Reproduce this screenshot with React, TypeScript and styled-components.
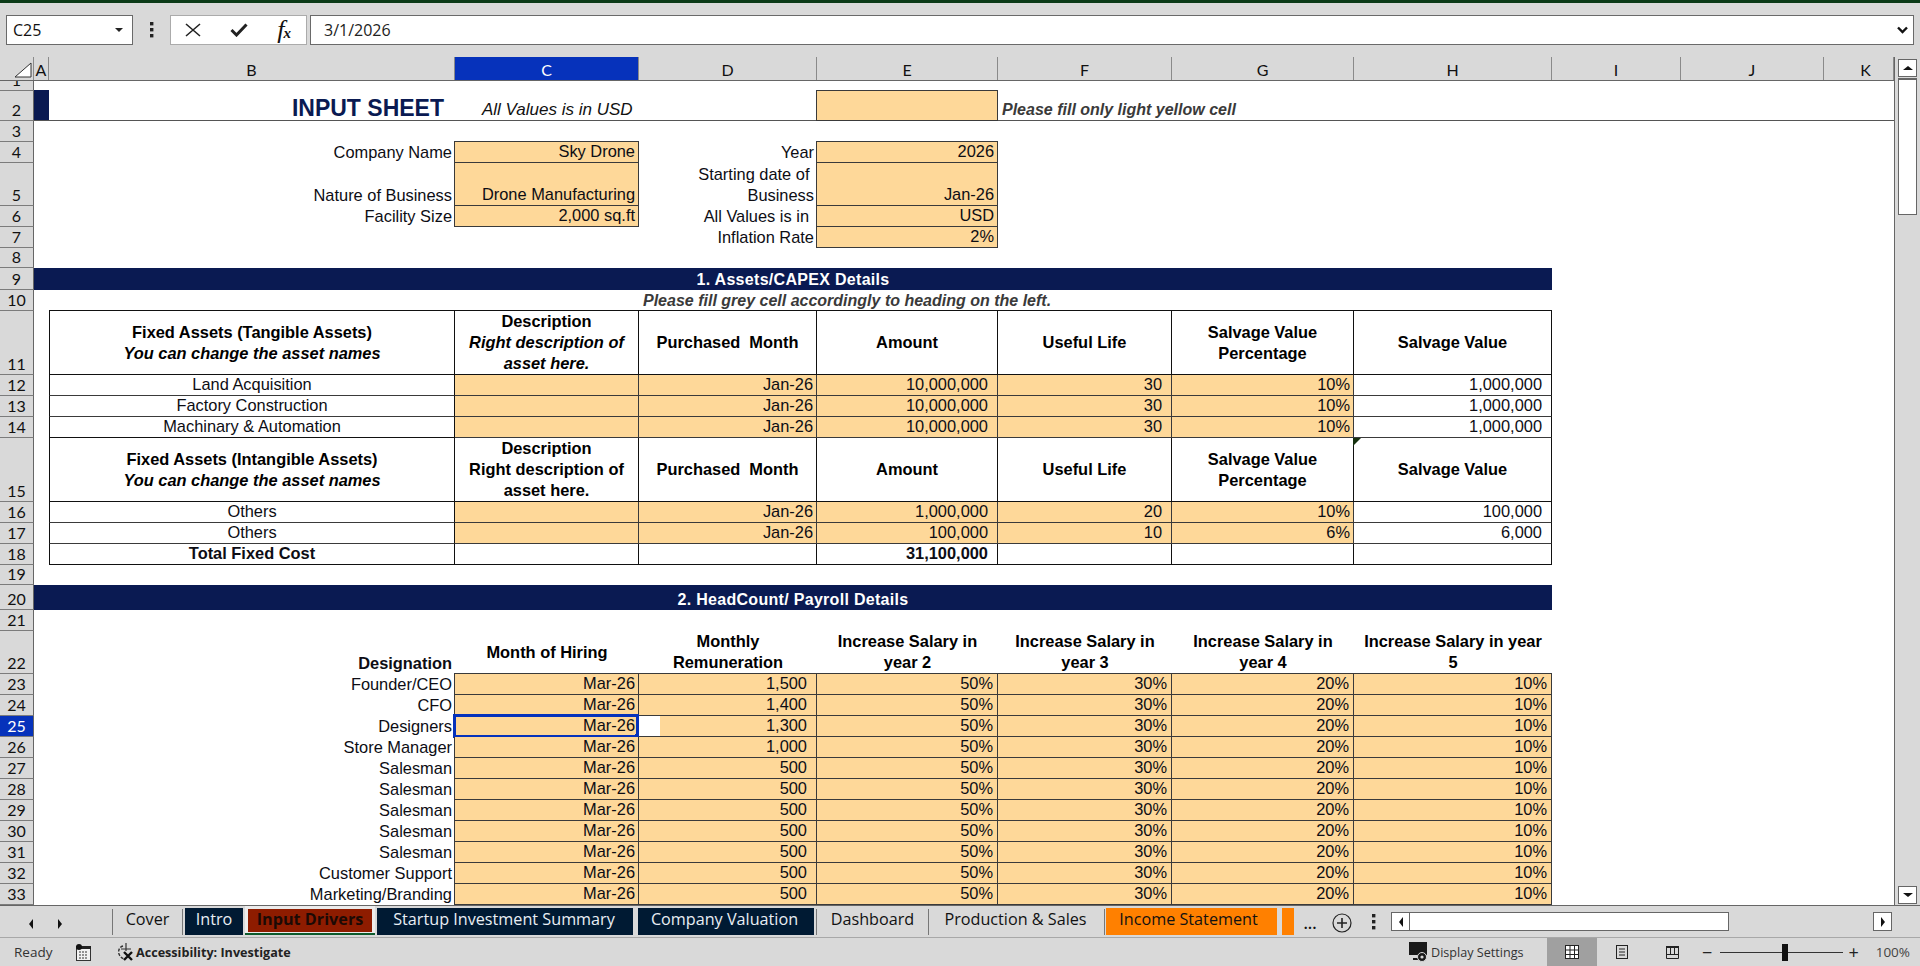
import React from "react";
import styled, { createGlobalStyle, css } from "styled-components";

const CELL_FONT = `"Liberation Sans", Arial, sans-serif`;
const UI_FONT = `"Open Sans", "Noto Sans", sans-serif`;
const HEAD_FONT = `Lato, "Open Sans", sans-serif`;
const ORANGE = "#fed899";
const NAVY = "#0a1a52";
const LINE = "#3a3a3a";
const SELECT = "#0632bb";
const GRID_COLUMNS = "34px 15px 406px 184px 178px 181px 174px 182px 198px 129px 143px 70px";

const Global = createGlobalStyle`
  html, body { margin: 0; padding: 0; background: #d9d9d9; overflow: hidden; }
  * { box-sizing: border-box; }
`;

const Window = styled.div`
  width: 1920px;
  height: 966px;
  display: flex;
  flex-direction: column;
  background: #d9d9d9;
  overflow: hidden;
`;
const TitleStrip = styled.div`
  height: 3px;
  flex: none;
  background: #0b3a17;
`;
const FormulaBar = styled.div`
  height: 54px;
  flex: none;
  display: flex;
  padding: 12px 6px 12px 6px;
  align-items: stretch;
`;
const NameBox = styled.div`
  width: 127px;
  background: #fff;
  border: 1px solid #6a6a6a;
  display: flex;
  align-items: center;
  justify-content: space-between;
  padding: 0 9px 0 6px;
  font: 16px ${UI_FONT};
  color: #111;
`;
const DownCaret = styled.span`
  width: 0;
  height: 0;
  border-left: 4px solid transparent;
  border-right: 4px solid transparent;
  border-top: 4px solid #222;
`;
const KebabWrap = styled.div`
  width: 37px;
  display: flex;
  align-items: center;
  justify-content: center;
`;
const FxGroup = styled.div`
  width: 137px;
  background: #fff;
  border: 1px solid #ababab;
  display: flex;
  align-items: center;
  justify-content: space-between;
  padding: 0 15px 0 14px;
`;
const FxF = styled.span`
  font: italic 400 26px/24px "Liberation Serif", serif;
  color: #111;
`;
const FxX = styled.span`
  font: italic 700 15px/15px "Liberation Serif", serif;
  color: #111;
  margin-left: -1px;
`;
const FormulaInput = styled.div`
  flex: 1;
  margin-left: 3px;
  background: #fff;
  border: 1px solid #6a6a6a;
  display: flex;
  align-items: center;
  justify-content: space-between;
  padding: 0 5px 0 13px;
  font: 16px ${UI_FONT};
  color: #222;
`;

const Middle = styled.div`
  height: 848px;
  flex: none;
  display: flex;
`;
const Sheet = styled.div`
  width: 1895px;
  display: flex;
  flex-direction: column;
  border-right: 1px solid #666;
  background: #fff;
  overflow: hidden;
`;
const ColumnHeader = styled.div`
  display: grid;
  grid-template-columns: ${GRID_COLUMNS};
  height: 24px;
  flex: none;
  background: #d9d9d9;
  border-bottom: 1px solid #666;
`;
const Corner = styled.div`
  display: flex;
  align-items: flex-end;
  justify-content: flex-end;
  padding: 0 1px 2px 0;
  border-right: 1px solid #8a8a8a;
`;
const ColHead = styled.div<{ $active?: boolean; $shift?: number }>`
  display: flex;
  align-items: center;
  justify-content: center;
  padding-top: 2px;
  padding-left: ${(p) => p.$shift ?? 0}px;
  font: 16px ${HEAD_FONT};
  border-right: 1px solid #8a8a8a;
  color: ${(p) => (p.$active ? "#fff" : "#111")};
  background: ${(p) => (p.$active ? SELECT : "transparent")};
`;
const Row = styled.div<{ $h: number }>`
  display: grid;
  grid-template-columns: ${GRID_COLUMNS};
  grid-template-rows: ${(p) => p.$h}px;
  height: ${(p) => p.$h}px;
  flex: none;
`;
const RowHead = styled.div<{ $active?: boolean }>`
  grid-column: 1;
  grid-row: 1;
  display: flex;
  align-items: flex-end;
  justify-content: center;
  overflow: hidden;
  font: 16px/20px ${HEAD_FONT};
  background: ${(p) => (p.$active ? SELECT : "#d9d9d9")};
  color: ${(p) => (p.$active ? "#fff" : "#111")};
  border-right: 1px solid #666;
  border-bottom: 1px solid #7c7c7c;
`;
const RuleLine = styled.div`
  grid-column: 2 / -1;
  grid-row: 1;
  border-bottom: 1px solid #555;
`;
const Marker = styled.div`
  grid-column: 2;
  grid-row: 1;
  background: ${NAVY};
  margin: -1px 0 1px;
`;

const cellBase = css<{ $col: number; $span?: number }>`
  grid-column: ${(p) => p.$col} / span ${(p) => p.$span ?? 1};
  grid-row: 1;
  font-family: ${CELL_FONT};
  font-size: 16.4px;
  line-height: 21px;
  color: #0d0d14;
  white-space: pre;
  display: flex;
`;
const Title = styled.div<{ $col: number }>`
  ${cellBase};
  justify-content: flex-end;
  align-items: flex-end;
  padding: 0 11px 2px 0;
  font-size: 23px;
  font-weight: 700;
  color: ${NAVY};
`;
const Caption = styled.div<{ $col: number; $pl?: number }>`
  ${cellBase};
  align-items: flex-end;
  padding-left: ${(p) => p.$pl ?? 0}px;
  padding-bottom: 1px;
  font-size: 17px;
  font-style: italic;
  color: #111;
`;
const Notice = styled.div<{ $col: number; $pb?: number }>`
  ${cellBase};
  align-items: flex-end;
  padding-left: 4px;
  padding-bottom: ${(p) => p.$pb ?? 1}px;
  font-size: 16px;
  font-style: italic;
  font-weight: 700;
  color: #3a3a3a;
`;
const Label = styled.div<{ $col: number; $pr?: number }>`
  ${cellBase};
  justify-content: flex-end;
  align-items: flex-end;
  text-align: right;
  padding-right: ${(p) => p.$pr ?? 3}px;
`;
const Designation = styled(Label)`
  font-weight: 700;
`;
const Input = styled.div<{
  $col: number;
  $pr?: number;
  $top?: boolean;
  $nick?: boolean;
}>`
  ${cellBase};
  justify-content: flex-end;
  align-items: flex-end;
  padding-right: ${(p) => p.$pr ?? 3}px;
  background: ${(p) =>
    p.$nick
      ? `linear-gradient(to right, #fff 21px, ${ORANGE} 21px)`
      : ORANGE};
  border-right: 1px solid ${LINE};
  border-bottom: 1px solid ${LINE};
  ${(p) => p.$top && `margin-top: -1px; border-top: 1px solid ${LINE};`}
`;
const LeadInput = styled(Input)`
  position: relative;
  margin-left: -1px;
  border-left: 1px solid ${LINE};
`;
const Selected = styled(Input)`
  position: relative;
`;
const SelectionRing = styled.span`
  position: absolute;
  left: -2px;
  top: -2px;
  right: -1px;
  bottom: -2px;
  border: 3px solid ${SELECT};
  pointer-events: none;
  &::after {
    content: "";
    position: absolute;
    right: -3px;
    bottom: -3px;
    width: 4px;
    height: 4px;
    background: ${SELECT};
  }
`;
const Band = styled.div<{ $drop?: number }>`
  grid-column: 2 / span 8;
  grid-row: 1;
  background: ${NAVY};
  color: #fff;
  display: flex;
  align-items: center;
  justify-content: center;
  padding-top: ${(p) => p.$drop ?? 0}px;
  font: 700 16px/21px ${CELL_FONT};
  letter-spacing: 0.3px;
`;
const Head = styled.div<{
  $col: number;
  $left?: boolean;
  $top?: boolean;
  $flag?: boolean;
}>`
  ${cellBase};
  position: relative;
  align-items: center;
  justify-content: center;
  text-align: center;
  font-weight: 700;
  color: #000;
  background: #fff;
  border-right: 1px solid #111;
  border-bottom: 1px solid #111;
  ${(p) => p.$left && `border-left: 1px solid #111;`}
  ${(p) => p.$top && `margin-top: -1px; border-top: 1px solid #111;`}
  ${(p) =>
    p.$flag &&
    `&::before { content: ""; position: absolute; left: -1px; top: 0; width: 0; height: 0;
      border-top: 8px solid #16310f; border-right: 8px solid transparent; }`}
`;
const Em = styled.em`
  font-style: italic;
`;
const Name = styled.div<{ $col: number; $bold?: boolean; $close?: boolean }>`
  ${cellBase};
  align-items: flex-end;
  justify-content: center;
  background: #fff;
  border-left: 1px solid #111;
  border-right: 1px solid #111;
  border-bottom: 1px solid ${(p) => (p.$close ? "#111" : LINE)};
  font-weight: ${(p) => (p.$bold ? 700 : 400)};
`;
const Plain = styled.div<{ $col: number; $bold?: boolean; $pr?: number; $close?: boolean }>`
  ${cellBase};
  align-items: flex-end;
  justify-content: flex-end;
  background: #fff;
  padding-right: ${(p) => p.$pr ?? 9}px;
  border-right: 1px solid #111;
  border-bottom: 1px solid ${(p) => (p.$close ? "#111" : LINE)};
  font-weight: ${(p) => (p.$bold ? 700 : 400)};
`;
const ColumnTitle = styled.div<{ $col: number }>`
  ${cellBase};
  align-items: center;
  justify-content: center;
  text-align: center;
  padding-bottom: 1px;
  font-weight: 700;
  color: #000;
`;

const VScroll = styled.div`
  flex: 1;
  display: flex;
  flex-direction: column;
  padding: 2px 3px 0 3px;
`;
const ScrollButton = styled.div<{ $bottom?: boolean }>`
  height: 18px;
  flex: none;
  background: #fff;
  border: 1px solid #666;
  display: flex;
  align-items: center;
  justify-content: center;
  ${(p) => p.$bottom && "margin-top: auto; margin-bottom: 1px;"}
`;
const ScrollThumb = styled.div`
  height: 137px;
  flex: none;
  margin-top: 1px;
  background: #fff;
  border: 1px solid #666;
  border-top-width: 2px;
`;
const Arrow = styled.span<{ $dir: "up" | "down" | "left" | "right"; $size?: number }>`
  width: 0;
  height: 0;
  ${(p) => {
    const s = p.$size ?? 4;
    switch (p.$dir) {
      case "up":
        return `border-left:${s + 1}px solid transparent;border-right:${s + 1}px solid transparent;border-bottom:${s}px solid #111;`;
      case "down":
        return `border-left:${s + 1}px solid transparent;border-right:${s + 1}px solid transparent;border-top:${s}px solid #111;`;
      case "left":
        return `border-top:${s + 1}px solid transparent;border-bottom:${s + 1}px solid transparent;border-right:${s}px solid #111;`;
      default:
        return `border-top:${s + 1}px solid transparent;border-bottom:${s + 1}px solid transparent;border-left:${s}px solid #111;`;
    }
  }}
`;

const TabBar = styled.div`
  height: 33px;
  flex: none;
  display: flex;
  align-items: flex-start;
  border-top: 1px solid #666;
  border-bottom: 1px solid #a8a8a8;
  background: #d9d9d9;
`;
const TabNav = styled.div`
  width: 112px;
  height: 31px;
  flex: none;
  display: flex;
  align-items: center;
  padding: 4px 0 0 29px;
  gap: 25px;
`;
const tabVariants = {
  plain: css`
    color: #111;
    margin-top: 3px;
    height: 26px;
    border-left: 1px solid #777;
  `,
  navy: css`
    color: #e9eef4;
    background: #001a33;
    margin-top: 2px;
    height: 27px;
  `,
  orange: css`
    color: #111;
    background: #ff8000;
    margin-top: 2px;
    height: 27px;
  `,
};
type TabKind = keyof typeof tabVariants;
const Tab = styled.div<{ $kind: TabKind; $w: number; $gap?: number; $pr?: number }>`
  width: ${(p) => p.$w}px;
  margin-left: ${(p) => p.$gap ?? 0}px;
  flex: none;
  display: flex;
  align-items: center;
  justify-content: center;
  padding-bottom: 6px;
  padding-right: ${(p) => p.$pr ?? 0}px;
  font: 16.2px/22px ${UI_FONT};
  white-space: nowrap;
  ${(p) => tabVariants[p.$kind]}
`;
const ActiveTab = styled.div`
  width: 130px;
  height: 29px;
  margin-left: 2px;
  flex: none;
  background: #ececec;
  border-bottom: 2px solid #0b5a2c;
  padding: 3px 3px 1px;
  display: flex;
`;
const ActiveLabel = styled.div`
  flex: 1;
  background: #8e1c00;
  color: #1c0a05;
  display: flex;
  align-items: center;
  justify-content: center;
  padding-bottom: 3px;
  font: 700 16.2px/20px ${UI_FONT};
  white-space: nowrap;
`;
const Ellipsis = styled.div`
  width: 32px;
  padding-top: 6px;
  text-align: center;
  font: 600 16px ${UI_FONT};
  color: #111;
`;
const PlusWrap = styled.div`
  width: 22px;
  height: 31px;
  margin-left: 6px;
  display: flex;
  align-items: center;
  padding-top: 2px;
`;
const TabKebab = styled.div`
  width: 20px;
  height: 31px;
  margin-left: 10px;
  display: flex;
  align-items: center;
  justify-content: center;
`;
const HScroll = styled.div`
  margin-top: 6px;
  margin-left: 7px;
  display: flex;
  height: 19px;
`;
const HButton = styled.div<{ $gap?: number }>`
  width: 19px;
  background: #fff;
  border: 1px solid #666;
  display: flex;
  align-items: center;
  justify-content: center;
  margin-left: ${(p) => p.$gap ?? 0}px;
`;
const HThumb = styled.div`
  width: 319px;
  background: #fff;
  border: 1px solid #666;
  border-left-width: 0;
`;

const StatusBar = styled.div`
  flex: 1;
  display: flex;
  align-items: stretch;
  font: 13.5px ${UI_FONT};
  color: #333;
`;
const StatusText = styled.div`
  display: flex;
  align-items: center;
  padding-left: 14px;
  width: 76px;
`;
const StatusIcon = styled.div`
  display: flex;
  align-items: center;
`;
const Access = styled.div`
  display: flex;
  align-items: center;
  gap: 0;
  margin-left: 24px;
  font-weight: 700;
  color: #222;
  font-size: 12.6px;
`;
const StatusRight = styled.div`
  margin-left: auto;
  padding-right: 10px;
  display: flex;
  align-items: stretch;
`;
const Display = styled.div`
  display: flex;
  align-items: center;
  gap: 2px;
  width: 138px;
  font-size: 12.6px;
`;
const ViewButton = styled.div<{ $active?: boolean }>`
  width: 50px;
  display: flex;
  align-items: center;
  justify-content: center;
  background: ${(p) => (p.$active ? "#a0a0a0" : "transparent")};
`;
const Zoom = styled.div`
  display: flex;
  align-items: center;
  margin-left: 5px;
  width: 208px;
  gap: 5px;
`;
const Slider = styled.div`
  position: relative;
  width: 125px;
  height: 1px;
  margin-left: 3px;
  background: #333;
`;
const SliderThumb = styled.span`
  position: absolute;
  left: 62px;
  top: -8px;
  width: 6px;
  height: 17px;
  background: #111;
`;
const ZoomGlyph = styled.span`
  font: 18px/18px ${UI_FONT};
  color: #222;
`;
const ZoomValue = styled.span`
  margin-left: 12px;
  font-size: 13.5px;
  color: #444;
`;

const Kebab = () => (
  <svg width="4" height="16" viewBox="0 0 4 16">
    <rect x="0" y="0" width="3.4" height="3.4" fill="#222" />
    <rect x="0" y="6" width="3.4" height="3.4" fill="#222" />
    <rect x="0" y="12" width="3.4" height="3.4" fill="#222" />
  </svg>
);

const rowsFixedTop = [
  ["Land Acquisition", "10,000,000", "30", "10%", "1,000,000"],
  ["Factory Construction", "10,000,000", "30", "10%", "1,000,000"],
  ["Machinary & Automation", "10,000,000", "30", "10%", "1,000,000"],
];
const rowsFixedBottom = [
  ["Others", "1,000,000", "20", "10%", "100,000"],
  ["Others", "100,000", "10", "6%", "6,000"],
];
const staff = [
  ["Founder/CEO", "1,500"],
  ["CFO", "1,400"],
  ["Designers", "1,300"],
  ["Store Manager", "1,000"],
  ["Salesman", "500"],
  ["Salesman", "500"],
  ["Salesman", "500"],
  ["Salesman", "500"],
  ["Salesman", "500"],
  ["Customer Support", "500"],
  ["Marketing/Branding", "500"],
];
const columns = ["A", "B", "C", "D", "E", "F", "G", "H", "I", "J", "K"];

const AssetRow = ({ n, r, close }: { n: number; r: string[]; close?: boolean }) => (
  <Row $h={21}>
    <RowHead>{n}</RowHead>
    <Name $col={3} $close={close}>{r[0]}</Name>
    <Input $col={4} />
    <Input $col={5}>Jan-26</Input>
    <Input $col={6} $pr={9}>{r[1]}</Input>
    <Input $col={7} $pr={9}>{r[2]}</Input>
    <Input $col={8}>{r[3]}</Input>
    <Plain $col={9}>{r[4]}</Plain>
  </Row>
);

const AssetHead = ({
  n,
  title,
  desc,
  top,
  flag,
}: {
  n: number;
  title: string;
  desc: React.ReactNode;
  top?: boolean;
  flag?: boolean;
}) => (
  <Row $h={64}>
    <RowHead>{n}</RowHead>
    <Head $col={3} $left $top={top}>
      <span>
        {title}
        {"\n"}
        <Em>You can change the asset names</Em>
      </span>
    </Head>
    <Head $col={4} $top={top}>{desc}</Head>
    <Head $col={5} $top={top}>Purchased  Month</Head>
    <Head $col={6} $top={top}>Amount</Head>
    <Head $col={7} $top={top}>Useful Life</Head>
    <Head $col={8} $top={top}>{"Salvage Value\nPercentage"}</Head>
    <Head $col={9} $top={top} $flag={flag}>Salvage Value</Head>
  </Row>
);

export default function App() {
  return (
    <Window>
      <Global />
      <TitleStrip />
      <FormulaBar>
        <NameBox>
          C25
          <DownCaret />
        </NameBox>
        <KebabWrap>
          <Kebab />
        </KebabWrap>
        <FxGroup>
          <svg width="16" height="14" viewBox="0 0 16 14">
            <path d="M1 1 L15 13 M15 1 L1 13" stroke="#222" strokeWidth="1.6" fill="none" />
          </svg>
          <svg width="18" height="14" viewBox="0 0 18 14">
            <path d="M1.5 7 L6.5 12 L16.5 1.5" stroke="#222" strokeWidth="3" fill="none" />
          </svg>
          <span>
            <FxF>f</FxF>
            <FxX>x</FxX>
          </span>
        </FxGroup>
        <FormulaInput>
          3/1/2026
          <svg width="11" height="8" viewBox="0 0 11 8">
            <path d="M1 1.5 L5.5 6 L10 1.5" stroke="#111" strokeWidth="2.4" fill="none" />
          </svg>
        </FormulaInput>
      </FormulaBar>

      <Middle>
        <Sheet>
          <ColumnHeader>
            <Corner>
              <svg width="18" height="16" viewBox="0 0 18 16">
                <path d="M1 15 L17 1 L17 15 Z" fill="#fff" stroke="#333" strokeWidth="1" />
              </svg>
            </Corner>
            {columns.map((c) => (
              <ColHead key={c} $active={c === "C"} $shift={c === "K" ? 14 : 0}>
                {c}
              </ColHead>
            ))}
          </ColumnHeader>

          <Row $h={10}>
            <RowHead>1</RowHead>
          </Row>
          <Row $h={30}>
            <RowHead>2</RowHead>
            <RuleLine />
            <Marker />
            <Title $col={3}>INPUT SHEET</Title>
            <Caption $col={4} $pl={27}>All Values is in USD</Caption>
            <LeadInput $col={6} $top />
            <Notice $col={7}>Please fill only light yellow cell</Notice>
          </Row>
          <Row $h={21}>
            <RowHead>3</RowHead>
          </Row>
          <Row $h={21}>
            <RowHead>4</RowHead>
            <Label $col={3}>Company Name</Label>
            <LeadInput $col={4} $top>Sky Drone</LeadInput>
            <Label $col={5}>Year</Label>
            <LeadInput $col={6} $top>2026</LeadInput>
          </Row>
          <Row $h={43}>
            <RowHead>5</RowHead>
            <Label $col={3}>Nature of Business</Label>
            <LeadInput $col={4}>Drone Manufacturing</LeadInput>
            <Label $col={5}>{"Starting date of \nBusiness"}</Label>
            <LeadInput $col={6}>Jan-26</LeadInput>
          </Row>
          <Row $h={21}>
            <RowHead>6</RowHead>
            <Label $col={3}>Facility Size</Label>
            <LeadInput $col={4}>2,000 sq.ft</LeadInput>
            <Label $col={5} $pr={8}>All Values is in</Label>
            <LeadInput $col={6}>USD</LeadInput>
          </Row>
          <Row $h={21}>
            <RowHead>7</RowHead>
            <Label $col={5}>Inflation Rate</Label>
            <LeadInput $col={6}>2%</LeadInput>
          </Row>
          <Row $h={20}>
            <RowHead>8</RowHead>
          </Row>
          <Row $h={22}>
            <RowHead>9</RowHead>
            <Band>1. Assets/CAPEX Details</Band>
          </Row>
          <Row $h={21}>
            <RowHead>10</RowHead>
            <Notice $col={5} $pb={0}>Please fill grey cell accordingly to heading on the left.</Notice>
          </Row>

          <AssetHead
            n={11}
            top
            title="Fixed Assets (Tangible Assets)"
            desc={
              <span>
                Description{"\n"}
                <Em>{"Right description of\nasset here."}</Em>
              </span>
            }
          />
          {rowsFixedTop.map((r, i) => (
            <AssetRow key={i} n={12 + i} r={r} close={i === 2} />
          ))}
          <AssetHead
            n={15}
            flag
            title="Fixed Assets (Intangible Assets)"
            desc={"Description\nRight description of\nasset here."}
          />
          {rowsFixedBottom.map((r, i) => (
            <AssetRow key={i} n={16 + i} r={r} />
          ))}
          <Row $h={21}>
            <RowHead>18</RowHead>
            <Name $col={3} $bold $close>Total Fixed Cost</Name>
            <Plain $col={4} $close />
            <Plain $col={5} $close />
            <Plain $col={6} $bold $close>31,100,000</Plain>
            <Plain $col={7} $close />
            <Plain $col={8} $close />
            <Plain $col={9} $close />
          </Row>
          <Row $h={20}>
            <RowHead>19</RowHead>
          </Row>
          <Row $h={25}>
            <RowHead>20</RowHead>
            <Band $drop={3}>2. HeadCount/ Payroll Details</Band>
          </Row>
          <Row $h={21}>
            <RowHead>21</RowHead>
          </Row>
          <Row $h={43}>
            <RowHead>22</RowHead>
            <Designation $col={3}>Designation</Designation>
            <ColumnTitle $col={4}>Month of Hiring</ColumnTitle>
            <ColumnTitle $col={5}>{"Monthly\nRemuneration"}</ColumnTitle>
            <ColumnTitle $col={6}>{"Increase Salary in\nyear 2"}</ColumnTitle>
            <ColumnTitle $col={7}>{"Increase Salary in\nyear 3"}</ColumnTitle>
            <ColumnTitle $col={8}>{"Increase Salary in\nyear 4"}</ColumnTitle>
            <ColumnTitle $col={9}>{"Increase Salary in year\n5"}</ColumnTitle>
          </Row>
          {staff.map(([role, pay], i) => {
            const n = 23 + i;
            const active = n === 25;
            const top = i === 0;
            return (
              <Row key={n} $h={21}>
                <RowHead $active={active}>{n}</RowHead>
                <Label $col={3}>{role}</Label>
                {active ? (
                  <Selected $col={4}>
                    Mar-26
                    <SelectionRing />
                  </Selected>
                ) : (
                  <LeadInput $col={4} $top={top}>Mar-26</LeadInput>
                )}
                <Input $col={5} $pr={9} $top={top} $nick={active}>{pay}</Input>
                <Input $col={6} $pr={4} $top={top}>50%</Input>
                <Input $col={7} $pr={4} $top={top}>30%</Input>
                <Input $col={8} $pr={4} $top={top}>20%</Input>
                <Input $col={9} $pr={4} $top={top}>10%</Input>
              </Row>
            );
          })}
        </Sheet>
        <VScroll>
          <ScrollButton>
            <Arrow $dir="up" />
          </ScrollButton>
          <ScrollThumb />
          <ScrollButton $bottom>
            <Arrow $dir="down" />
          </ScrollButton>
        </VScroll>
      </Middle>

      <TabBar>
        <TabNav>
          <Arrow $dir="left" />
          <Arrow $dir="right" />
        </TabNav>
        <Tab $kind="plain" $w={70}>Cover</Tab>
        <Tab $kind="plain" $w={2} />
        <Tab $kind="navy" $w={58} $gap={1}>Intro</Tab>
        <ActiveTab>
          <ActiveLabel>Input Drivers</ActiveLabel>
        </ActiveTab>
        <Tab $kind="navy" $w={256} $gap={2} $pr={2}>Startup Investment Summary</Tab>
        <Tab $kind="navy" $w={176} $gap={5} $pr={3}>Company Valuation</Tab>
        <Tab $kind="plain" $w={112} $gap={2}>Dashboard</Tab>
        <Tab $kind="plain" $w={176} $pr={2}>Production &amp; Sales</Tab>
        <Tab $kind="plain" $w={2} />
        <Tab $kind="orange" $w={171} $pr={6}>Income Statement</Tab>
        <Tab $kind="orange" $w={12} $gap={5} />
        <Ellipsis>...</Ellipsis>
        <PlusWrap>
          <svg width="20" height="20" viewBox="0 0 20 20">
            <circle cx="10" cy="10" r="9" fill="none" stroke="#222" strokeWidth="1.2" />
            <path d="M10 5 V15 M5 10 H15" stroke="#222" strokeWidth="1.6" />
          </svg>
        </PlusWrap>
        <TabKebab>
          <Kebab />
        </TabKebab>
        <HScroll>
          <HButton>
            <Arrow $dir="left" />
          </HButton>
          <HThumb />
          <HButton $gap={144}>
            <Arrow $dir="right" />
          </HButton>
        </HScroll>
      </TabBar>

      <StatusBar>
        <StatusText>Ready</StatusText>
        <StatusIcon>
          <svg width="16" height="17" viewBox="0 0 16 17">
            <rect x="0.5" y="2.5" width="14" height="14" fill="#f2f2f2" stroke="#333" />
            <rect x="0" y="2" width="15" height="3" fill="#222" />
            <circle cx="3" cy="3" r="3" fill="#111" />
            <path d="M3 8h9M3 11h9M3 14h9" stroke="#333" strokeDasharray="2 1" />
          </svg>
        </StatusIcon>
        <Access>
          <svg width="20" height="20" viewBox="0 0 20 20">
            <path d="M7 4 C3 5 2 9 3 12 C4 15 6 16 8 17" fill="none" stroke="#333" strokeWidth="1.4" strokeDasharray="3 1.5" />
            <path d="M10 1 V9 M5 7 L15 7" stroke="#333" strokeWidth="1.2" />
            <path d="M8 10 L16 18 M16 10 L8 18" stroke="#111" strokeWidth="2.4" />
          </svg>
          Accessibility: Investigate
        </Access>
        <StatusRight>
          <Display>
            <svg width="20" height="20" viewBox="0 0 20 20">
              <rect x="0" y="0" width="18" height="13" fill="#1a1a1a" />
              <rect x="4" y="16" width="7" height="2" fill="#1a1a1a" />
              <circle cx="13" cy="15" r="4.5" fill="#1a1a1a" stroke="#d9d9d9" />
              <circle cx="13" cy="15" r="1.6" fill="#d9d9d9" />
            </svg>
            Display Settings
          </Display>
          <ViewButton $active>
            <svg width="14" height="14" viewBox="0 0 14 14">
              <rect x="0.5" y="0.5" width="13" height="13" fill="#fff" stroke="#222" />
              <path d="M0 5H14M0 9.5H14M5 0V14M9.5 0V14" stroke="#222" />
            </svg>
          </ViewButton>
          <ViewButton>
            <svg width="12" height="14" viewBox="0 0 12 14">
              <rect x="0.5" y="0.5" width="11" height="13" fill="none" stroke="#222" />
              <path d="M3 4H9M3 7H9M3 10H9" stroke="#222" />
            </svg>
          </ViewButton>
          <ViewButton>
            <svg width="13" height="13" viewBox="0 0 13 13">
              <path d="M0.5 1H12.5V12.5H0.5Z M4.5 1V8 M8.5 1V8 M0.5 8.5H12.5" fill="none" stroke="#222" />
              <rect x="0" y="0" width="13" height="2" fill="#222" />
            </svg>
          </ViewButton>
          <Zoom>
            <ZoomGlyph>−</ZoomGlyph>
            <Slider>
              <SliderThumb />
            </Slider>
            <ZoomGlyph>+</ZoomGlyph>
            <ZoomValue>100%</ZoomValue>
          </Zoom>
        </StatusRight>
      </StatusBar>
    </Window>
  );
}
